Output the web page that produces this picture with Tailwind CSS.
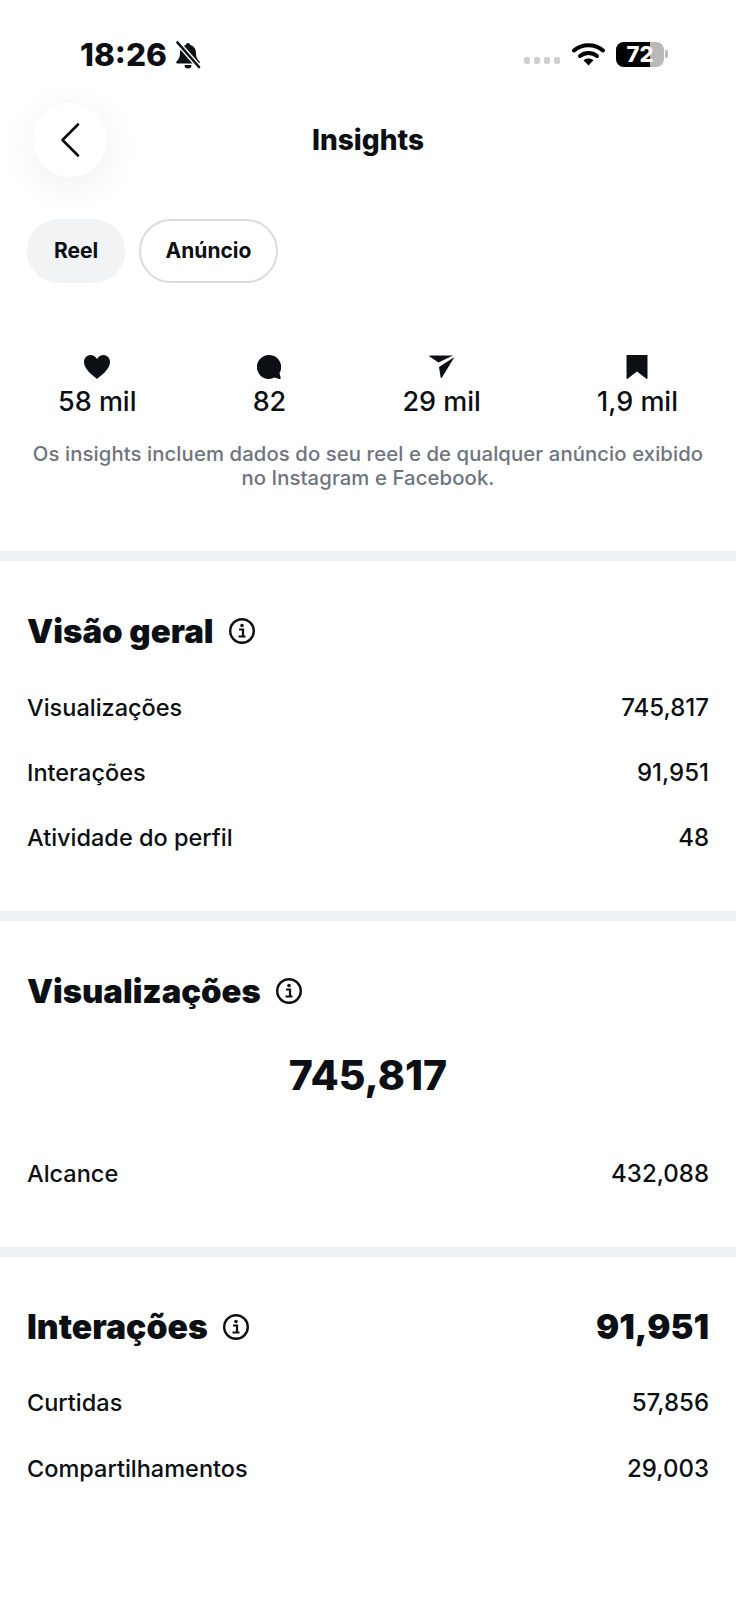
<!DOCTYPE html>
<html lang="pt">
<head>
<meta charset="utf-8">
<script src="https://cdn.jsdelivr.net/npm/@tailwindcss/browser@4"></script>
</head>
<body class="bg-white">
<div class="w-[736px] h-[1600px] overflow-hidden bg-white text-[#0c1014] font-['Inter',sans-serif] flex flex-col">
  <!-- status bar -->
  <div class="h-[103px] shrink-0 relative flex items-start justify-between pl-[80px] pr-[68px] pt-[37px]">
    <div class="flex items-center gap-[8px] h-[34px]">
      <span class="text-[31.500px] leading-[34px] font-extrabold mt-[1px]">18:26</span>
      <svg width="26" height="28" viewBox="0 0 26 28" class="mt-[1px]"><path d="M13 2c-1.200 0-2 .8-2.200 2C7 5 5 8 5 12c0 4-1 6-3.500 8.500-.7.900-.2 2 1 2h21c1.200 0 1.700-1.100 1-2C22 18 21 16 21 12c0-4-2-7-5.800-8C15 2.800 14.200 2 13 2zM9.500 24a3.500 3.500 0 0 0 7 0z" fill="#0c1014"/><path d="M3 2l21 24" stroke="#fff" stroke-width="5"/><path d="M2.500 1.500L24 26" stroke="#0c1014" stroke-width="2.600" stroke-linecap="round"/></svg>
    </div>
    <div class="flex items-center h-[34px]">
      <div class="flex gap-[3.500px] mr-[12px] mt-[13px]">
        <span class="w-[6.500px] h-[7px] rounded-[2px] bg-[#cfcfcf]"></span><span class="w-[6.500px] h-[7px] rounded-[2px] bg-[#cfcfcf]"></span><span class="w-[6.500px] h-[7px] rounded-[2px] bg-[#cfcfcf]"></span><span class="w-[6.500px] h-[7px] rounded-[2px] bg-[#cfcfcf]"></span>
      </div>
      <svg width="33" height="24" viewBox="0 0 33 24" class="mr-[11px]"><path d="M2 8.500C10 1.500 23 1.500 31 8.500" fill="none" stroke="#000" stroke-width="4" stroke-linecap="round"/><path d="M8 14c5-4 12-4 17 0" fill="none" stroke="#000" stroke-width="4" stroke-linecap="round"/><path d="M11.500 18.200c3-2.400 7-2.400 10 0L16.500 23.500z" fill="#000"/></svg>
      <div class="flex items-center">
        <div class="relative w-[48px] h-[25px] rounded-[8px] bg-[#b9b9b9]">
          <div class="absolute left-0 top-0 bottom-0 w-[34px] rounded-l-[8px] bg-black"></div>
          <span class="absolute inset-0 flex items-center justify-center text-white text-[22px] font-extrabold leading-none">72</span>
        </div>
        <div class="w-[3px] h-[8px] rounded-r-[2px] bg-[#b9b9b9] ml-[1px]"></div>
      </div>
    </div>
  </div>
  <!-- header -->
  <div class="h-[74px] shrink-0 relative flex items-center justify-center">
    <div class="absolute left-[33px] top-0 w-[74px] h-[74px] rounded-full bg-white shadow-[0_8px_40px_rgba(0,0,0,0.07)] flex items-center justify-center">
      <svg width="22" height="36" viewBox="0 0 22 36"><path d="M19 2.500L3.500 18 19 33.500" fill="none" stroke="#0c1014" stroke-width="2.600" stroke-linecap="round" stroke-linejoin="round"/></svg>
    </div>
    <span class="text-[28px] font-extrabold leading-none">Insights</span>
  </div>
  <!-- pills -->
  <div class="flex gap-[14px] pl-[27px] mt-[42px] shrink-0">
    <div class="h-[64px] w-[98px] rounded-full bg-[#f2f3f5] flex items-center justify-center text-[21px] font-bold">Reel</div>
    <div class="h-[64px] w-[139px] rounded-full border-2 border-[#dcdcdc] flex items-center justify-center text-[21px] font-bold">Anúncio</div>
  </div>
  <!-- stats -->
  <div class="flex justify-between pl-[58px] pr-[58px] mt-[72px] shrink-0">
    <div class="flex flex-col items-center">
      <svg width="26" height="24" viewBox="0 0 26 24"><path d="M13 24C10 21 0 15 0 7c0-4 3-7 6.500-7C9 0 11.500 1.500 13 4c1.500-2.500 4-4 6.500-4C23 0 26 3 26 7c0 8-10 14-13 17z" fill="#0c1014"/></svg>
      <span class="text-[27px] leading-[32px] mt-[7px] font-medium">58 mil</span>
    </div>
    <div class="flex flex-col items-center">
      <svg width="24" height="24" viewBox="0 0 24 24"><path d="M12 0a12 12 0 1 0 5.500 22.600l4.500 1.300c1.200.3 2-.2 1.700-1.200L22.500 18A12 12 0 0 0 12 0z" fill="#0c1014"/></svg>
      <span class="text-[27px] leading-[32px] mt-[7px] font-medium">82</span>
    </div>
    <div class="flex flex-col items-center">
      <svg width="26" height="24" viewBox="0 0 26 24"><path d="M1 .5H24L9.500 7.500 .5 1.500C.2 1 .5.500 1 .5z" fill="#0c1014"/><path d="M25.500 2L13 22.500c-.4.700-1.200.5-1.400-.3L10 12z" fill="#0c1014"/></svg>
      <span class="text-[27px] leading-[32px] mt-[7px] font-medium">29 mil</span>
    </div>
    <div class="flex flex-col items-center">
      <svg width="22" height="24" viewBox="0 0 22 24"><path d="M.5 0h21v23.200c0 .6-.6.900-1.100.5L11 16.500 1.600 23.700c-.5.400-1.100.1-1.100-.5z" fill="#0c1014"/></svg>
      <span class="text-[27px] leading-[32px] mt-[7px] font-medium">1,9 mil</span>
    </div>
  </div>
  <p class="mt-[24px] px-[20px] text-center text-[20.300px] leading-[24px] font-medium text-[#6e7480] tracking-[0.1px] shrink-0">Os insights incluem dados do seu reel e de qualquer anúncio exibido<br>no Instagram e Facebook.</p>
  <div class="h-[10px] bg-[#f0f1f5] mt-[61px] shrink-0"></div>
  <!-- overview -->
  <div class="px-[27px] pt-[49px] h-[350px] shrink-0">
    <div class="flex items-center gap-[14px] h-[42px]">
      <h2 class="text-[33px] leading-[42px] font-black">Visão geral</h2>
      <svg width="28" height="28" viewBox="0 0 28 28"><circle cx="14" cy="14" r="11.800" fill="none" stroke="#0c1014" stroke-width="2.400"/><circle cx="14" cy="8.500" r="1.800" fill="#0c1014"/><path d="M11 12.500h4V19M10.500 19.500h7" fill="none" stroke="#0c1014" stroke-width="2.200"/></svg>
    </div>
    <div class="flex justify-between items-center h-[65px] mt-[23px] text-[23.500px] font-medium"><span>Visualizações</span><span class="text-[24px]">745,817</span></div>
    <div class="flex justify-between items-center h-[65px] text-[23.500px] font-medium"><span>Interações</span><span class="text-[24px]">91,951</span></div>
    <div class="flex justify-between items-center h-[66px] text-[23.500px] font-medium"><span>Atividade do perfil</span><span class="text-[24px]">48</span></div>
  </div>
  <div class="h-[10px] bg-[#f0f1f5] shrink-0"></div>
  <!-- views -->
  <div class="px-[27px] pt-[49px] h-[326px] shrink-0">
    <div class="flex items-center gap-[14px] h-[42px]">
      <h2 class="text-[32.800px] leading-[42px] font-black">Visualizações</h2>
      <svg width="28" height="28" viewBox="0 0 28 28"><circle cx="14" cy="14" r="11.800" fill="none" stroke="#0c1014" stroke-width="2.400"/><circle cx="14" cy="8.500" r="1.800" fill="#0c1014"/><path d="M11 12.500h4V19M10.500 19.500h7" fill="none" stroke="#0c1014" stroke-width="2.200"/></svg>
    </div>
    <div class="text-center text-[41px] leading-[50px] font-extrabold mt-[38px]">745,817</div>
    <div class="flex justify-between items-center h-[66px] mt-[41px] text-[23.500px] font-medium"><span>Alcance</span><span class="text-[24px]">432,088</span></div>
  </div>
  <div class="h-[10px] bg-[#f0f1f5] shrink-0"></div>
  <!-- interactions -->
  <div class="px-[27px] pt-[49px]">
    <div class="flex items-center justify-between h-[42px]">
      <div class="flex items-center gap-[14px]">
        <h2 class="text-[33.700px] leading-[42px] font-black">Interações</h2>
        <svg width="28" height="28" viewBox="0 0 28 28"><circle cx="14" cy="14" r="11.800" fill="none" stroke="#0c1014" stroke-width="2.400"/><circle cx="14" cy="8.500" r="1.800" fill="#0c1014"/><path d="M11 12.500h4V19M10.500 19.500h7" fill="none" stroke="#0c1014" stroke-width="2.200"/></svg>
      </div>
      <span class="text-[34.500px] leading-[42px] font-black">91,951</span>
    </div>
    <div class="flex justify-between items-center h-[66px] mt-[22px] text-[23.500px] font-medium"><span>Curtidas</span><span class="text-[24px]">57,856</span></div>
    <div class="flex justify-between items-center h-[65px] text-[23.500px] font-medium"><span>Compartilhamentos</span><span class="text-[24px]">29,003</span></div>
  </div>
</div>
</body>
</html>
